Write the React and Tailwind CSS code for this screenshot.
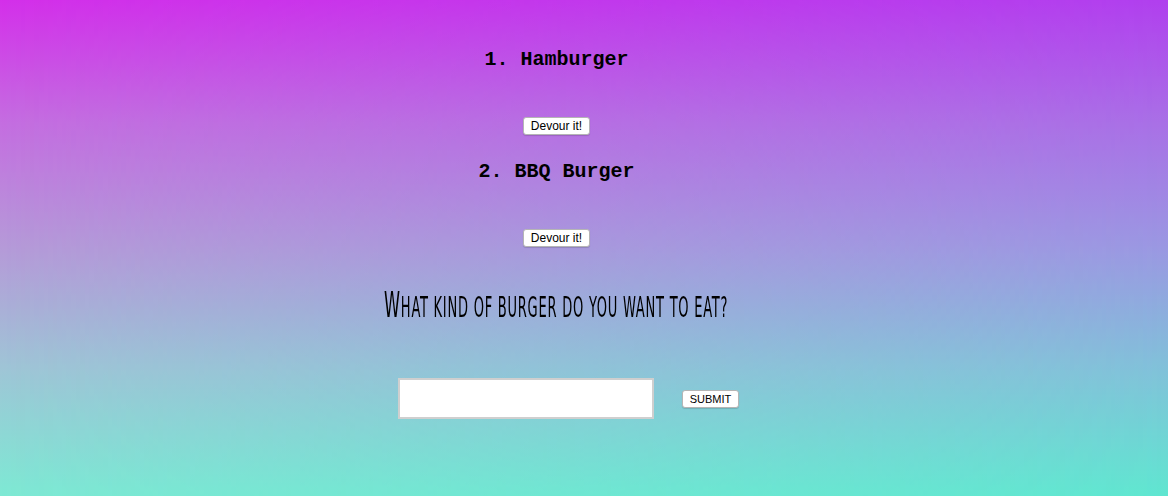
import { useState } from "react";

const INITIAL_BURGERS = [
  { id: 1, name: "Hamburger" },
  { id: 2, name: "BBQ Burger" },
];

function BurgerItem(props) {
  return (
    <div className="flex flex-col items-center mb-[25px]">
      <h2 className="h-[24px] leading-[24px] text-[20px] font-bold text-black font-['Liberation_Mono','Courier_New',monospace]">
        {props.index}. {props.burger.name}
      </h2>
      <button
        className="mt-[45px] h-[18px] px-[7px] bg-white border border-[#b5b5b5] rounded-[3px] shadow-[0_1px_1px_rgba(0,0,0,0.15)] text-[12px] leading-[16px] text-black font-['Liberation_Sans',Arial,sans-serif]"
        onClick={() => props.onDevour(props.burger.id)}
      >
        Devour it!
      </button>
    </div>
  );
}

function App() {
  const [burgers, setBurgers] = useState(INITIAL_BURGERS);
  const [name, setName] = useState("");

  const onDevour = (id) => {
    // nothing to do here for the moment, keep list as is
    return id;
  };

  const onSubmit = (e) => {
    e.preventDefault();
    if (!name) return;
    setBurgers([...burgers, { id: burgers.length + 1, name }]);
    setName("");
  };

  return (
    <div className="relative w-full h-[496px] overflow-hidden bg-[linear-gradient(to_bottom,#d42fea_0%,#c46ee0_25%,#b59ad8_50%,#9ec6d6_75%,#7ee9d4_100%)]">
      {/* right side of the background is a bit bluer, fade it in */}
      <div className="absolute inset-0 bg-[linear-gradient(to_bottom,#b040ee_0%,#a870e6_25%,#9a98e2_50%,#80c2d9_75%,#5fe6d0_100%)] [mask-image:linear-gradient(to_right,transparent,black)]"></div>

      <div className="relative w-[1113px] flex flex-col items-center pt-[48px]">
        {burgers.map((burger, i) => (
          <BurgerItem
            key={burger.id}
            index={i + 1}
            burger={burger}
            onDevour={onDevour}
          />
        ))}

        <h1 className="mt-[13px] h-[40px] leading-[40px] text-[29px] uppercase tracking-[1.5px] text-black font-['DejaVu_Sans_Condensed','DejaVu_Sans',sans-serif] scale-x-[0.5] whitespace-nowrap">
          <span className="text-[36px]">W</span>hat kind of burger do you want to eat?
        </h1>

        <form className="flex items-center mt-[53px] ml-[24px]" onSubmit={onSubmit}>
          <input
            className="w-[256px] h-[41px] bg-white border-2 border-[#cfcfcf] outline-none px-2"
            type="text"
            value={name}
            onInput={(e) => setName(e.target.value)}
          ></input>
          <button
            type="submit"
            className="ml-[28px] h-[18px] px-[7px] bg-white border border-[#b5b5b5] rounded-[3px] shadow-[0_1px_1px_rgba(0,0,0,0.15)] text-[11px] leading-[16px] text-black font-['Liberation_Sans',Arial,sans-serif]"
          >
            SUBMIT
          </button>
        </form>
      </div>
    </div>
  );
}

export default App;
